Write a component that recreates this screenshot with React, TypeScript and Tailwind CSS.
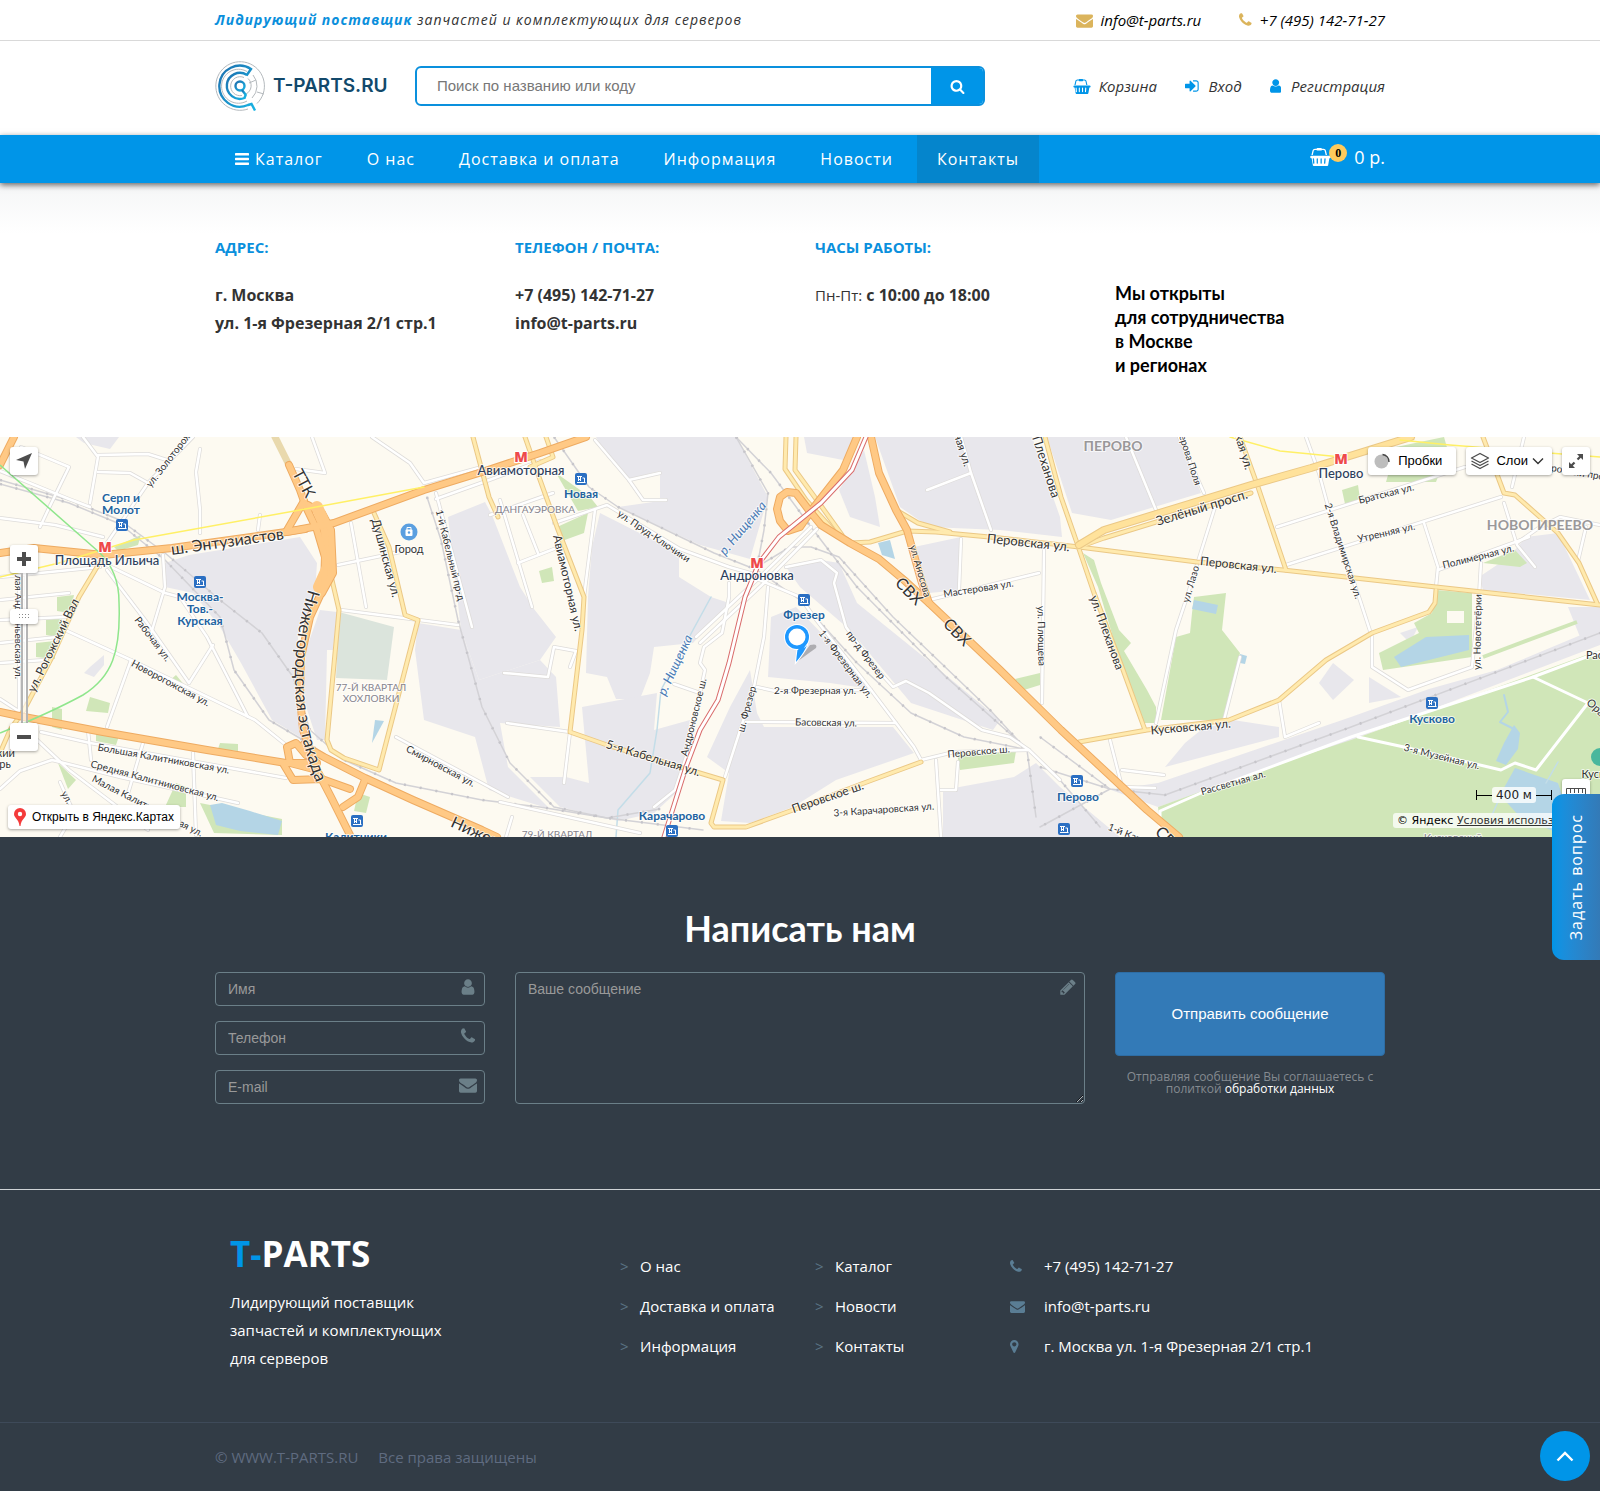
import type { ReactNode } from 'react'

// Each icon: left edge and width of the glyph inside the 1792 unit em, then its outline
const ICONS = {
  envelope: {
    box: '0 0 1792 1792',
    d: 'M1792 710v794q0 66-47 113t-113 47h-1472q-66 0-113-47t-47-113v-794q44 49 101 87 362 246 497 345 57 42 92.500 65.500t94.500 48 110 24.500h2q51 0 110-24.500t94.500-48 92.500-65.500q170-123 498-345 57-39 100-87zm0-294q0 79-49 151t-122 123q-376 261-468 325-10 7-42.500 31t-54 38.500-52 32.500-57.500 27-50 9h-2q-23 0-50-9t-57.500-27-52-32.500-54-38.500-42.500-31q-91-64-262-182.500t-205-142.500q-62-42-117-115.500t-55-136.500q0-78 41.500-130t118.500-52h1472q65 0 112.500 47t47.500 113z',
  },
  phone: {
    box: '192 0 1408 1792',
    d: 'M1600 1240q0 27-10 70.500t-21 68.500q-21 50-122 106-94 51-186 51-27 0-53-3.500t-57.500-12.500-47-14.500-55.500-20.500-49-18q-98-35-175-83-127-79-264-216t-216-264q-48-77-83-175-3-9-18-49t-20.500-55.500-14.500-47-12.500-57.500-3.500-53q0-92 51-186 56-101 106-122 25-11 68.500-21t70.500-10q14 0 21 3 18 6 53 76 11 19 30 54t35 63.500 31 53.500q3 4 17.500 25t21.500 35.500 7 28.500q0 20-28.500 50t-62 55-62 53-28.500 46q0 9 5 22.500t8.500 20.500 14 24 11.500 19q76 137 174 235t235 174q2 1 19 11.500t24 14 20.500 8.500 22.500 5q18 0 46-28.500t53-62 55-62 50-28.500q14 0 28.500 7t35.500 21.500 25 17.500q25 15 53.500 31t63.500 35 54 30q70 35 76 53 3 7 3 21z',
  },
  user: {
    box: '256 0 1280 1792',
    d: 'M1536 1399q0 109-62.500 187t-150.500 78h-854q-88 0-150.500-78t-62.500-187q0-85 8.500-160.500t31.500-152 58.500-131 94-89 134.500-34.500q131 128 313 128t313-128q76 0 134.500 34.500t94 89 58.500 131 31.500 152 8.500 160.500zm-256-887q0 159-112.500 271.500t-271.500 112.500-271.500-112.500-112.500-271.500 112.500-271.500 271.500-112.500 271.500 112.500 112.500 271.500z',
  },
  search: {
    box: '64 0 1664 1792',
    d: 'M1216 832q0-185-131.500-316.500t-316.500-131.500-316.500 131.500-131.500 316.500 131.500 316.500 316.500 131.500 316.500-131.500 131.500-316.500zm512 832q0 52-38 90t-90 38q-54 0-90-38l-343-342q-179 124-399 124-143 0-273.500-55.500t-225-150-150-225-55.500-273.500 55.500-273.500 150-225 225-150 273.500-55.500 273.500 55.500 225 150 150 225 55.500 273.500q0 220-124 399l343 343q37 37 37 90z',
  },
  signIn: {
    box: '128 0 1536 1792',
    d: 'M1312 896q0 26-19 45l-544 544q-19 19-45 19t-45-19-19-45v-288h-448q-26 0-45-19t-19-45v-384q0-26 19-45t45-19h448v-288q0-26 19-45t45-19 45 19l544 544q19 19 19 45zm352-352v704q0 119-84.500 203.500t-203.500 84.500h-320q-13 0-22.500-9.500t-9.500-22.500q0-4-1-20t-.5-26.500 3-23.500 10-19.500 20.500-6.500h320q66 0 113-47t47-113v-704q0-66-47-113t-113-47h-312l-11.500-1-11.500-3-8-5.500-7-9-2-13.500q0-4-1-20t-.5-26.500 3-23.500 10-19.500 20.500-6.500h320q119 0 203.500 84.500t84.500 203.500z',
  },
  pencil: {
    box: '128 0 1536 1792',
    d: 'M491 1536l91-91-235-235-91 91v107h128v128h107zm523-928q0-22-22-22-10 0-17 7l-542 542q-7 7-7 17 0 22 22 22 10 0 17-7l542-542q7-7 7-17zm-54-192l416 416-832 832h-416v-416zm683 96q0 53-37 90l-166 166-416-416 166-165q36-38 90-38 53 0 91 38l235 234q37 39 37 91z',
  },
  marker: {
    box: '384 0 1024 1792',
    d: 'M1152 640q0-106-75-181t-181-75-181 75-75 181 75 181 181 75 181-75 75-181zm256 0q0 109-33 179l-364 774q-16 33-47.500 52t-67.500 19-67.500-19-46.500-52l-365-774q-33-70-33-179 0-212 150-362t362-150 362 150 150 362z',
  },
}

const BASKET =
  'M2048 768q53 0 90.500 37.500t37.500 90.500-37.500 90.500-90.500 37.500h-15l-115 662q-8 46-44 76t-82 30h-1280q-46 0-82-30t-44-76l-115-662h-15q-53 0-90.500-37.500t-37.500-90.500 37.500-90.500 90.500-37.500h1792zm-1563 800q26-2 43.500-22.500t15.500-46.500l-32-416q-2-26-22.500-43.500t-46.500-15.500-43.500 22.500-15.500 46.500l32 416q2 25 20.500 42t43.500 17h5zm411-64v-416q0-26-19-45t-45-19-45 19-19 45v416q0 26 19 45t45 19 45-19 19-45zm384 0v-416q0-26-19-45t-45-19-45 19-19 45v416q0 26 19 45t45 19 45-19 19-45zm352 5l32-416q2-26-15.500-46.500t-43.500-22.500-46.500 15.500-22.500 43.500l-32 416q-2 26 15.500 46.500t43.500 22.500h5q25 0 43.500-17t20.500-42zm-1156-1217l-93 412h-132l101-441q19-88 89-143.500t160-55.500h167q0-26 19-45t45-19h384q26 0 45 19t19 45h167q90 0 160 55.500t89 143.500l101 441h-132l-93-412q-11-44-45.500-72t-79.500-28h-167q0 26-19 45t-45 19h-384q-26 0-45-19t-19-45h-167q-45 0-79.500 28t-45.500 72z'

function Icon({ name, className }: { name: keyof typeof ICONS; className: string }) {
  return (
    <svg viewBox={ICONS[name].box} fill="currentColor" className={className} aria-hidden="true">
      <path d={ICONS[name].d} />
    </svg>
  )
}

function BasketIcon({ className }: { className: string }) {
  return (
    <svg viewBox="128 0 2048 1792" fill="currentColor" className={className} aria-hidden="true">
      <path d={BASKET} />
    </svg>
  )
}

function Container({ children, className = '' }: { children: ReactNode; className?: string }) {
  return <div className={`mx-auto w-full max-w-[1200px] px-[15px] ${className}`}>{children}</div>
}

/* ---------- Header ---------- */

function LogoMark() {
  return (
    <svg viewBox="0 0 50 50" className="size-[50px]" fill="none" aria-hidden="true">
      <defs>
        <linearGradient id="logoBlue" x1="0" y1="0" x2="1" y2="1">
          <stop offset="0" stopColor="#1d6fae" />
          <stop offset="1" stopColor="#19b4e4" />
        </linearGradient>
      </defs>
      <g stroke="#b4b9bd" strokeWidth="1">
        <path d="M33 48A24.300 24.300 0 1 1 42 42.500" />
        <path d="M38 14A17 17 0 0 1 37 37M32 40A17 17 0 1 1 32 10.500" />
        <path d="M33 17.500A9.500 9.500 0 0 1 31 33M27 34.500A9.500 9.500 0 1 1 29 16.500" />
        <path d="M34 22L41 19M42 31L49 33" />
      </g>
      <g stroke="url(#logoBlue)" strokeWidth="2.400">
        <path d="M31.500 14.500L36 8A20.500 20.500 0 1 0 33 44L36.500 43L40 49.500" />
        <path d="M32 14A13 13 0 1 0 29.500 37L31 33" />
        <circle cx="25" cy="25" r="4.500" />
        <path d="M27 29L30.500 33.500" />
      </g>
    </svg>
  )
}

function TopBar() {
  return (
    <div className="border-b border-[#d9d9d9]">
      <Container className="flex h-10 items-center justify-between italic">
        <p className="text-sm tracking-[1px] text-[#333]">
          <b className="text-[#0a8fdc]">Лидирующий поставщик</b> запчастей и комплектующих для серверов
        </p>
        <div className="flex gap-[38px] text-[15px] text-black">
          <a href="mailto:info@t-parts.ru" className="flex items-center gap-2">
            <Icon name="envelope" className="h-[17px] w-auto text-[#dbb45c]" />
            info@t-parts.ru
          </a>
          <a href="tel:+74951427127" className="flex items-center gap-2">
            <Icon name="phone" className="h-4 w-auto text-[#dbb45c]" />
            +7 (495) 142-71-27
          </a>
        </div>
      </Container>
    </div>
  )
}

function SearchRow() {
  return (
    <Container className="flex h-[94px] items-center pb-1">
      <a href="#" className="flex w-[200px] items-center gap-2">
        <LogoMark />
        <span className="font-['Inter',sans-serif] text-[19px] font-semibold text-[#12496b]">T-PARTS.RU</span>
      </a>
      <form className="flex h-10 w-[570px] overflow-hidden rounded-md border-2 border-[#0a90dd]">
        <input
          type="text"
          aria-label="Поиск"
          placeholder="Поиск по названию или коду"
          className="min-w-0 flex-1 px-5 font-['Liberation_Sans',sans-serif] text-[15px] outline-none placeholder:text-[#777]"
        />
        <button type="button" aria-label="Найти" className="flex w-[52px] items-center justify-center bg-[#0095e8] text-white">
          <Icon name="search" className="size-[15px]" />
        </button>
      </form>
      <div className="ml-auto flex gap-7 text-[15px] text-[#333] italic">
        <a href="#" className="flex items-center gap-2">
          <BasketIcon className="h-[15px] w-[18px] text-[#0095e8]" />
          Корзина
        </a>
        <a href="#" className="flex items-center gap-2.5">
          <Icon name="signIn" className="h-4 w-auto text-[#0095e8]" />
          Вход
        </a>
        <a href="#" className="flex items-center gap-2.5">
          <Icon name="user" className="h-4 w-auto text-[#0095e8]" />
          Регистрация
        </a>
      </div>
    </Container>
  )
}

const NAV = ['О нас', 'Доставка и оплата', 'Информация', 'Новости', 'Контакты']

function NavBar() {
  return (
    <nav className="relative bg-[#0095e8] text-white shadow-[0_2px_6px_rgba(0,0,0,0.6)]">
      <Container className="flex h-12 items-stretch text-base">
        <div className="flex gap-1 tracking-[1px]">
          <a href="#" className="flex items-center gap-1.5 px-5">
            <svg viewBox="0 0 14 12" className="h-3 w-3.5" fill="currentColor" aria-hidden="true">
              <rect width="14" height="2.500" rx="0.600" />
              <rect y="4.700" width="14" height="2.500" rx="0.600" />
              <rect y="9.400" width="14" height="2.500" rx="0.600" />
            </svg>
            Каталог
          </a>
          {NAV.map((item) => (
            <a
              key={item}
              href="#"
              className={`flex items-center px-5 ${item === 'Контакты' ? 'bg-[#0585cc]' : ''}`}
            >
              {item}
            </a>
          ))}
        </div>
        <a href="#" className="ml-auto flex items-center pb-1 text-lg">
          <BasketIcon className="h-[18px] w-[21px]" />
          <span className="-ml-0.5 mb-2 flex size-[18px] items-center justify-center rounded-full bg-[#ffcb5c] font-['Liberation_Serif',serif] text-xs font-bold text-black">
            0
          </span>
          <span className="ml-[7px]">0 р.</span>
        </a>
      </Container>
    </nav>
  )
}

/* ---------- Contacts ---------- */

function Contacts() {
  return (
    <section className="bg-gradient-to-b from-[#f5f6f7] to-white to-20%">
      <Container className="grid h-[254px] grid-cols-4 gap-[30px] pt-[52px] text-base leading-7 text-[#333]">
        <div>
          <h3 className="mb-[22px] text-[15px] leading-6 font-bold text-[#0a90dd]">АДРЕС:</h3>
          <p className="font-bold">
            г. Москва
            <br />
            ул. 1-я Фрезерная 2/1 стр.1
          </p>
        </div>
        <div>
          <h3 className="mb-[22px] text-[15px] leading-6 font-bold text-[#0a90dd]">ТЕЛЕФОН / ПОЧТА:</h3>
          <p className="font-bold">
            +7 (495) 142-71-27
            <br />
            info@t-parts.ru
          </p>
        </div>
        <div>
          <h3 className="mb-[22px] text-[15px] leading-6 font-bold text-[#0a90dd]">ЧАСЫ РАБОТЫ:</h3>
          <p>
            <span className="text-[15px]">Пн-Пт:</span> <b>с 10:00 до 18:00</b>
          </p>
        </div>
        <p className="mt-[46px] font-['Lato',sans-serif] text-lg leading-6 font-bold text-black">
          Мы открыты
          <br />
          для сотрудничества
          <br />
          в Москве
          <br />и регионах
        </p>
      </Container>
    </section>
  )
}

/* ---------- Map ---------- */

const INDUSTRIAL = [
  '165,126 189,118 300,100 317,126 315,156 298,200 300,260 310,306 272,283 241,226 220,190 193,156 165,150',
  '306,213 327,213 325,303 317,303 303,260',
  '418,186 461,193 479,243 540,223 556,240 560,290 500,286 508,330 550,372 489,353 475,300 424,283 415,213',
  '448,80 485,65 492,78 520,150 534,172 556,200 540,223 479,243 461,193',
  '76,0 119,0 110,12 84,6',
  '90,230 104,218 104,228 94,240 84,236',
  '596,0 736,0 768,60 750,122 700,108 618,70 660,64 660,34 628,42 607,20',
  '600,76 679,116 679,140 711,160 729,166 693,206 654,210 650,236 640,262 616,262 607,240 586,236 588,160 592,110',
  '582,270 657,256 654,293 690,283 679,353 654,376 618,384 560,370 530,340 566,340 589,346',
  '771,180 796,170 830,205 871,252 830,246 768,240',
  '750,233 757,276 764,290 893,290 914,316 836,343 793,370 750,386 721,384 729,336 707,320 730,270',
  '943,353 1014,340 1036,326 1060,350 1090,375 1120,400 943,400',
  '875,0 1032,0 1060,80 1062,100 1000,93 929,90 900,70',
  '804,0 857,0 843,23 807,16',
  '839,53 864,13 875,60 880,90 850,80',
  '839,126 857,166 930,225 1000,283 993,293 911,266 850,193 800,150 786,130 821,123',
  '914,110 961,100 961,153 929,156',
  '1047,0 1179,0 1201,56 1111,83 1072,76',
  '1526,100 1558,96 1590,163 1483,153 1479,140 1500,126 1515,113',
  '1333,226 1354,243 1333,263 1319,246',
  '1369,240 1401,260 1369,266',
  '1201,293 1233,283 1279,290 1279,300 1165,330 1185,306',
  '1111,353 1158,346 1351,280 1429,252 1497,233 1600,190 1600,208 1344,306 1158,370',
  '1568,170 1600,170 1600,196 1580,200',
  '1400,196 1418,190 1410,206',
  '320,173 337,175 333,213 306,213',
]

const PARKS = [
  '114,110 141,98 138,108 118,114',
  '57,160 74,158 70,176 57,174',
  '46,183 62,181 62,201 46,198',
  '36,206 55,204 55,222 36,220',
  '90,260 110,266 108,276 86,274',
  '52,270 62,272 62,293 52,290',
  '96,290 120,296 116,308 96,304',
  '220,306 238,307 238,314 218,312',
  '165,370 176,346 186,350 186,370',
  '200,366 282,382 282,398 214,396',
  '169,244 176,238 186,250',
  '358,356 370,360 366,376 354,374',
  '58,326 76,343 68,352',
  '556,36 590,60 598,70 578,74',
  '557,90 588,76 584,96 562,104',
  '539,134 552,130 554,144 542,146',
  '957,316 1016,314 1014,326 960,333',
  '1015,242 1040,236 1040,248 1024,253',
  '1083,116 1094,123 1101,146 1119,193 1131,206 1124,214 1147,253 1156,270 1156,286 1144,286 1119,220 1098,150',
  '1194,160 1226,156 1222,193 1240,216 1226,283 1161,283 1176,200 1190,196 1192,176',
  '1436,153 1472,156 1472,220 1383,233 1379,216 1419,196 1414,186 1432,176',
  '1386,45 1396,10 1444,0 1448,14 1436,45',
  '1342,53 1358,48 1360,62 1345,67',
  '1483,126 1515,113 1527,126 1520,130',
  '1158,370 1269,330 1351,303 1600,213 1600,400 1180,400 1160,385',
]

const WATER = [
  '210,368 222,366 250,374 282,384 278,398 240,394 216,388',
  '1394,220 1426,200 1469,198 1469,213 1401,230',
  '1194,163 1218,168 1216,177 1192,172',
  '1240,217 1247,219 1245,227 1240,226',
  '1514,288 1520,296 1518,312 1506,328 1496,324 1504,306',
  '1515,331 1558,346 1566,370 1558,396 1520,380 1500,358',
  '878,106 890,103 895,122 882,118',
  '375,283 384,284 372,306',
]

const STREETS = [
  '193,0 148,46 107,106',
  '83,0 98,20 90,66',
  '21,10 69,30 48,73 40,90',
  '0,81 55,88 103,100',
  '98,18 148,17 170,24',
  '98,35 130,36 148,46',
  '0,34 69,62 90,70',
  '107,133 145,183 189,246',
  '65,193 131,223 193,253 255,283 286,308',
  '107,128 165,156 180,160 207,200 248,280',
  '213,208 189,246',
  '131,223 107,290',
  '41,295 90,306 286,341',
  '52,323 120,340 238,366',
  '34,300 69,333 148,393',
  '88,293 91,323',
  '143,306 127,360',
  '193,316 196,398',
  '0,352 20,334 52,323',
  '60,400 74,376 60,345',
  '396,300 508,360',
  '341,173 458,188',
  '436,56 472,190',
  '19,136 19,275',
  '26,136 26,275',
  '0,140 100,130',
  '0,163 69,156',
  '0,183 66,180',
  '0,206 57,200',
  '0,226 45,223',
  '163,118 165,150 150,200',
  '338,128 400,115',
  '351,86 366,170',
  '312,0 325,36 296,32',
  '200,12 196,35 200,73 200,96',
  '260,78 258,93',
  '372,0 410,26 424,46 482,30',
  '436,62 492,42 540,24',
  '500,63 532,170',
  '518,126 554,112',
  '523,78 538,116',
  '490,78 553,56',
  '595,73 584,160',
  '595,3 629,43 643,63 666,63',
  '629,43 660,36',
  '507,286 570,295 564,346',
  '554,86 607,68 680,112 729,130 757,138',
  '504,236 548,240 554,210 576,214 570,230',
  '0,262 20,275',
  '768,150 764,200 754,250 725,340',
  '757,250 775,254 871,253',
  '746,285 896,286',
  '757,142 800,160 814,180 871,253 896,286 914,310 921,323',
  '921,323 954,315 1029,313',
  '786,130 821,123 837,136 834,146 846,190 875,230 893,250 906,244 929,256 982,293 1010,300 1029,313 1060,343',
  '1044,113 1042,266',
  '929,163 1039,136',
  '961,102 959,153',
  '961,0 971,36 991,93',
  '971,36 927,53',
  '729,146 729,160 722,196 704,210 700,226 705,233 686,320 675,353 654,370',
  '700,256 674,247',
  '936,323 941,400',
  '941,353 956,353 958,325',
  '811,90 760,140 696,200',
  '817,92 764,146 700,206',
  '1306,0 1319,36 1329,73 1360,163 1372,200 1372,230 1408,253 1472,230 1479,160 1481,126',
  '1277,90 1465,30',
  '1286,128 1501,60',
  '1424,86 1438,130 1436,150',
  '1438,133 1529,100',
  '1215,70 1186,163 1176,193 1156,286',
  '1179,0 1204,56',
  '1126,0 1156,73',
  '1240,220 1224,283',
  '1279,263 1285,300 1319,286',
  '1504,66 1517,108 1535,130',
  '1524,0 1512,50',
  '1110,303 1122,350 1155,351',
  '1122,333 1164,338',
  '1517,106 1540,90 1560,80 1600,88',
  '1586,90 1578,124',
  '500,365 640,396',
  '512,380 506,400',
]

const PARK_PATHS = [
  '1160,390 1160,374 1201,356 1351,300 1533,240 1600,215',
  '1358,300 1404,310 1501,333 1515,326 1536,333 1588,266 1533,240',
]

const YELLOW_ROADS = [
  '100,125 79,160 52,220 24,273 10,293 0,316',
  '332,143 339,173 327,303 331,313 344,321 379,333 418,183 405,178 389,110 374,76',
  '473,0 489,60 498,80',
  '525,0 539,40 557,90 584,160 582,193 570,295 607,308 723,343 711,386 714,390 746,390 793,373 864,346 921,325',
  '546,0 553,20 530,30',
  '786,0 785,32 806,63 834,94 852,106 870,105 907,94 936,95 1000,101 1079,110 1197,125 1283,133 1436,150 1600,168',
  '796,0 795,33 819,66 842,98',
  '1045,0 1061,60 1077,106 1094,156 1122,230 1145,293',
  '1079,110 1104,101 1251,56',
  '1240,0 1258,50 1286,133',
  '1483,0 1504,56 1515,58 1558,96 1579,126 1597,166',
  '1079,305 1147,293 1229,283 1279,263 1326,223 1372,196 1429,175 1435,166 1436,153',
  '896,73 918,86 950,95',
]

const ORANGE_ROADS = [
  '0,116 34,111 103,118 172,111 286,95 334,86 424,53 482,35 540,16 586,0',
  '0,28 14,0',
  '289,28 300,53 306,70 317,93 325,120 324,150 310,180 301,220 300,260 303,293 317,333 331,360 351,400',
  '308,68 322,76 331,93 333,136 322,156',
  '304,64 286,95 305,92',
  '0,275 24,280 103,295 207,313 286,326 317,326',
  '303,308 324,320 365,341 413,363 482,393 497,400',
  '365,343 358,360 343,370',
  '317,333 290,326 287,310 296,306 306,318',
  '284,328 293,343 322,342 350,352',
  '857,0 843,33 814,70 800,90 788,94 780,84 777,72 780,60 787,55 796,56 808,72 821,88 850,106 879,122 904,143 929,166 1000,233 1061,293 1147,373 1179,400',
  '871,0 879,36 896,73 907,93 921,143 929,166',
]

const RAILS = [
  '0,43 69,63 120,83 165,116 220,163 262,196 293,240 310,293 344,323 396,346 482,363 540,370 607,381 703,393',
  '0,47 69,66 120,87 165,123 220,180 234,233 269,283 303,303 344,330',
  '427,60 441,103 458,183 482,270 510,326 554,370 607,381 660,372',
  '554,0 589,50 618,70 714,116 757,133 800,163 857,226 911,276 964,300 1029,313',
  '736,0 768,56 764,93 757,130',
  '736,0 771,36 811,90 857,150 946,240 1025,310 1060,343 1100,390',
  '757,130 790,110 811,110 839,120 893,180 990,273 1027,313 1036,380',
  '1040,330 1110,352 1165,358 1351,290 1600,196',
  '1040,300 1110,352 1040,390',
]

type LabelTone = 'blue' | 'gray' | 'district' | 'river' | 'metro'
type MapLabel = [text: string, x: number, y: number, angle: number, size: number, tone?: LabelTone]

const LABELS: MapLabel[] = [
  ['ш. Энтузиастов', 228, 110, -8, 16],
  ['ТТК', 299, 49, 62, 16],
  ['Серп и', 121, 65, 0, 12, 'blue'],
  ['Молот', 121, 77, 0, 12, 'blue'],
  ['Площадь Ильича', 107, 128, 0, 13, 'metro'],
  ['Москва-', 200, 164, 0, 12, 'blue'],
  ['Тов.-', 200, 176, 0, 12, 'blue'],
  ['Курская', 200, 188, 0, 12, 'blue'],
  ['ул. Рогожский Вал', 57, 210, -64, 12],
  ['Рабочая ул.', 150, 204, 53, 10],
  ['Новорогожская ул.', 169, 249, 28, 10],
  ['Душинская ул.', 382, 122, 75, 12],
  ['Город', 409, 116, 0, 11],
  ['1-й Кабельный пр-д', 447, 119, 76, 10],
  ['ДАНГАУЭРОВКА', 535, 76, 0, 10, 'gray'],
  ['Авиамоторная', 521, 38, 0, 13, 'metro'],
  ['Новая', 581, 61, 0, 12, 'blue'],
  ['77-Й КВАРТАЛ', 371, 254, 0, 10, 'gray'],
  ['ХОХЛОВКИ', 371, 265, 0, 10, 'gray'],
  ['Смирновская ул.', 439, 332, 28, 10],
  ['Большая Калитниковская ул.', 163, 325, 10, 10],
  ['Средняя Калитниковская ул.', 154, 347, 15, 10],
  ['Малая Калитниковская ул.', 146, 372, 27, 10],
  ['ул.', 64, 362, 60, 10],
  ['ул. Золоторожский', 178, 16, -52, 10],
  ['лая Андроньевская ул.', 15, 190, 90, 10],
  ['Нижегородская', 503, 413, 24, 16],
  ['Калитники', 356, 404, 0, 12, 'blue'],
  ['79-Й КВАРТАЛ', 557, 401, 0, 10, 'gray'],
  ['ский', 3, 320, 0, 11],
  ['рь', 5, 331, 0, 11],
  ['Авиамоторная ул.', 564, 147, 77, 12],
  ['ул. Пруд-Ключики', 652, 102, 34, 10],
  ['р. Нищенка', 746, 94, -50, 13, 'river'],
  ['р. Нищенка', 679, 230, -65, 13, 'river'],
  ['Андроновка', 757, 143, 0, 13, 'metro'],
  ['Фрезер', 804, 182, 0, 12, 'blue'],
  ['Карачарово', 672, 383, 0, 12, 'blue'],
  ['Андроновское ш.', 697, 281, -76, 10],
  ['ш. Фрезер', 750, 273, -75, 10],
  ['5-я Кабельная ул.', 652, 325, 17, 12],
  ['2-я Фрезерная ул.', 815, 257, 0, 10],
  ['Басовская ул.', 826, 289, 1, 10],
  ['1-я Фрезерная ул.', 843, 229, 53, 10],
  ['пр-д Фрезер', 863, 220, 53, 10],
  ['Перовское ш.', 829, 364, -19, 12],
  ['3-я Карачаровская ул.', 884, 376, -4, 10],
  ['Перовское ш.', 979, 318, -5, 10],
  ['ул. Аносова', 917, 135, 74, 10],
  ['СВХ', 905, 158, 46, 16],
  ['СВХ', 953, 199, 46, 16],
  ['СВХ', 1165, 407, 46, 16],
  ['Мастеровая ул.', 979, 155, -9, 10],
  ['Перовская ул.', 1028, 110, 6, 13],
  ['ул. Плющева', 1038, 199, 89, 10],
  ['Плеханова', 1042, 31, 72, 13],
  ['ная ул.', 959, 14, 72, 11],
  ['ПЕРОВО', 1113, 14, 0, 14, 'district'],
  ['ерова Поля', 1187, 24, 72, 10],
  ['кая ул.', 1240, 16, 73, 12],
  ['Зелёный просп.', 1203, 75, -17, 13],
  ['Перовская ул.', 1238, 132, 6, 12],
  ['ул. Лазо', 1194, 148, -74, 10],
  ['ул. Плеханова', 1103, 197, 70, 12],
  ['2-я Владимирская ул.', 1340, 115, 72, 10],
  ['Братская ул.', 1387, 60, -14, 10],
  ['Утренняя ул.', 1387, 99, -13, 10],
  ['Полимерная ул.', 1479, 123, -14, 10],
  ['НОВОГИРЕЕВО', 1540, 93, 0, 14, 'district'],
  ['Перово', 1341, 41, 0, 13, 'metro'],
  ['ул. Новотетёрки', 1481, 195, -89, 10],
  ['Кусково', 1432, 286, 0, 12, 'blue'],
  ['Кусковская ул.', 1191, 294, -5, 12],
  ['3-я Музейная ул.', 1441, 323, 14, 10],
  ['Рассветная ал.', 1234, 349, -16, 10],
  ['Перово', 1078, 364, 0, 12, 'blue'],
  ['1-й Карачаровский', 1148, 409, 22, 10],
  ['Кусково', 1602, 341, 0, 11],
  ['Оранжерейная', 1614, 292, 42, 11],
  ['Рассветная', 1614, 222, 0, 11],
  ['Кусковский', 1453, 405, 0, 11, 'gray'],
  ['розный проезд', 1585, 40, 10, 10],
]

const LABEL_TONES = {
  blue: 'fill-[#22639f] font-bold',
  gray: 'fill-[#85838c]',
  district: 'fill-[#9a9899] font-bold',
  river: 'fill-[#4a7bb5] italic',
  metro: 'fill-[#2d3e5c] font-medium',
  street: 'fill-[#333]',
}

const STATIONS = [
  [122, 88],
  [200, 145],
  [357, 384],
  [581, 42],
  [804, 163],
  [672, 394],
  [1432, 266],
  [1077, 344],
  [1064, 392],
]

const METRO = [
  [105, 110],
  [521, 20],
  [757, 126],
  [1341, 22],
]

const RED_LINE = '866,0 852,33 821,66 779,100 759,126 745,160 729,226 718,263 700,293 686,330 664,400'
const ZELYONY = '1079,108 1104,93 1251,48 1311,31 1411,0'

function Lines({ items, className }: { items: string[]; className: string }) {
  return (
    <g className={className} fill="none" strokeLinejoin="round" strokeLinecap="round">
      {items.map((points) => (
        <polyline key={points} points={points} />
      ))}
    </g>
  )
}

function Areas({ items, className }: { items: string[]; className: string }) {
  return (
    <g className={className}>
      {items.map((points) => (
        <polygon key={points} points={points} />
      ))}
    </g>
  )
}

function MapCanvas() {
  return (
    <svg viewBox="0 0 1600 400" preserveAspectRatio="xMidYMid slice" className="block size-full" role="img" aria-label="Карта">
      <rect width="1600" height="400" className="fill-[#fdfaf1]" />
      <Areas items={INDUSTRIAL} className="fill-[#e8e7ec]" />
      <polygon points="339,175 394,190 387,243 336,241" className="fill-[#dbe4dc]" />
      <Areas items={PARKS} className="fill-[#d0e6b8]" />
      <Areas items={WATER} className="fill-[#b4d5e6]" />
      <rect x="1447" y="174" width="17" height="12" className="fill-[#fdfaf1]" />
      <polyline points="1483,220 1577,185" className="stroke-[#d0e6b8] stroke-[4]" />
      <Lines
        items={['711,160 693,193 661,253 657,293 650,336 618,373 616,400', '1558,325 1546,346', '1500,360 1492,378']}
        className="stroke-[#c3dde8] stroke-[1.500]"
      />
      <Lines items={['1504,258 1508,275 1500,285 1514,292']} className="stroke-[#b4d5e6] stroke-2" />
      <Lines items={RAILS} className="stroke-[#d3d2d6] stroke-[1.500]" />
      <g fill="none" className="stroke-[#c6c5ca] stroke-[2.500]" strokeDasharray="2 14">
        {RAILS.map((points) => (
          <polyline key={points} points={points} />
        ))}
      </g>
      <Lines items={STREETS} className="stroke-[#dedcda] stroke-[4]" />
      <Lines items={STREETS} className="stroke-white stroke-[2.500]" />
      <Lines items={PARK_PATHS} className="stroke-white stroke-[3]" />
      <Lines items={YELLOW_ROADS} className="stroke-[#ebc886] stroke-[5]" />
      <Lines items={YELLOW_ROADS} className="stroke-[#ffeaae] stroke-[3]" />
      <Lines items={[ZELYONY]} className="stroke-[#ebc886] stroke-[8]" />
      <Lines items={[ZELYONY]} className="stroke-[#ffe29b] stroke-[6]" />
      <Lines items={['275,0 289,28']} className="stroke-[#e9d9ad] stroke-[7]" />
      <Lines items={ORANGE_ROADS} className="stroke-[#eeab62] stroke-[8]" />
      <Lines items={['317,70 327,93 328,130 319,150']} className="stroke-[#ffc985] stroke-[12]" />
      <Lines items={ORANGE_ROADS} className="stroke-[#ffc985] stroke-[6]" />
      <Lines items={['1400,3 1450,8 1600,20', '0,140 59,126 134,103 300,73 424,50', '1230,0 1280,14 1341,20']} className="stroke-[#fff066] stroke-[1.500]" />
      <path
        d="M0 28L100 116C112 128 119 145 119 165C121 215 112 240 83 258Q50 276 0 296"
        className="fill-none stroke-[#8fe68c] stroke-[1.500]"
      />
      <Lines items={[RED_LINE]} className="stroke-[#d96b6b] stroke-[5]" />
      <Lines items={[RED_LINE]} className="stroke-white stroke-[3]" />

      <g textAnchor="middle" className="font-['Lato',sans-serif] [paint-order:stroke] stroke-white/70 stroke-2" strokeLinejoin="round">
        {LABELS.map(([text, x, y, angle, size, tone]) => (
          <text key={`${text}-${x}`} x={x} y={y} fontSize={size} transform={`rotate(${angle} ${x} ${y})`} className={LABEL_TONES[tone ?? 'street']}>
            {text}
          </text>
        ))}
        <path id="estakada" d="M310 148Q294 195 295 245Q296 295 318 350" fill="none" stroke="none" />
        <text fontSize="17" className="fill-[#333]">
          <textPath href="#estakada" startOffset="50%">
            Нижегородская эстакада
          </textPath>
        </text>
        {METRO.map(([x, y]) => (
          <text key={x} x={x} y={y + 5} fontSize="14" className="fill-[#ee4a4a] stroke-white font-['Open_Sans',sans-serif] font-extrabold">
            М
          </text>
        ))}
      </g>

      {STATIONS.map(([x, y]) => (
        <g key={`${x}-${y}`} transform={`translate(${x - 6} ${y - 6})`}>
          <rect width="12" height="12" rx="2" className="fill-[#2b6fc2]" />
          <path d="M2 3.500H7M2 9.500H10.500M3.500 3.500V8M5.500 3.500V8M3 6.500H6M7.500 5H9.500V9" className="fill-none stroke-white stroke-1" />
        </g>
      ))}
      <g transform="translate(409 95)">
        <circle r="8.500" className="fill-[#5b9fe0]" />
        <rect x="-3.500" y="-2.500" width="7" height="6.500" rx="1" className="fill-white" />
        <path d="M-2 -2V-4.500H2V-2" className="fill-none stroke-white" />
        <circle cy="0.500" r="1.200" className="fill-[#5b9fe0]" />
      </g>
      <circle cx="1600" cy="320" r="9" className="fill-[#49b79d]" />

      {/* Office pin */}
      <path d="M798 224L810 208Q818 206 816 211Z" className="fill-black/25" />
      <g className="stroke-white stroke-2 [paint-order:stroke]">
        <path d="M796 225L798 208H807Q804 216 796 225Z" className="fill-[#1e98ff]" />
        <circle cx="797" cy="200" r="12" className="fill-[#1e98ff]" />
      </g>
      <path d="M797 223L799 207H806Q803 215 797 223Z" className="fill-[#1e98ff]" />
      <circle cx="797" cy="200" r="8.500" className="fill-white" />
    </svg>
  )
}

const CONTROL = 'flex items-center justify-center rounded-[3px] bg-white shadow-[0_1px_3px_rgba(0,0,0,0.35)]'

function MapSection() {
  return (
    <section className="relative h-[400px]">
      <div className="h-full overflow-hidden">
        <MapCanvas />
      </div>

      <div className="absolute top-2.5 left-2.5 flex flex-col items-center">
        <button type="button" aria-label="Моё местоположение" className={`${CONTROL} size-7`}>
          <svg viewBox="0 0 16 16" className="size-4 fill-[#4d4d4d]">
            <path d="M16 0L0 7L7.500 8.500L9 16Z" />
          </svg>
        </button>
        <button type="button" aria-label="Приблизить" className={`${CONTROL} mt-[70px] size-7`}>
          <svg viewBox="0 0 14 14" className="size-3.5 fill-[#4d4d4d]">
            <path d="M5 0h4v5H14v4H9V14H5V9H0V5H5Z" />
          </svg>
        </button>
        <div className="flex h-[150px] w-[7px] justify-center border-x-2 border-[#b5b5b5] bg-white/60 pt-9">
          <span className="flex h-[15px] w-7 shrink-0 items-center justify-center rounded-[3px] bg-white shadow-[0_1px_3px_rgba(0,0,0,0.35)]">
            <svg viewBox="0 0 11 5" className="h-[5px] w-[11px] fill-[#888]">
              {[0, 3, 6, 9].map((x) => (
                <path key={x} d={`M${x} 0h1v1h-1zM${x} 3h1v1h-1z`} />
              ))}
            </svg>
          </span>
        </div>
        <button type="button" aria-label="Отдалить" className={`${CONTROL} size-7`}>
          <span className="h-1 w-3.5 bg-[#4d4d4d]" />
        </button>
      </div>

      <div className="absolute top-2.5 right-2.5 flex gap-2.5 font-['Liberation_Sans',sans-serif] text-[13px] text-black">
        <button type="button" className={`${CONTROL} h-7 gap-2 pr-3.5 pl-1.5`}>
          <svg viewBox="0 0 16 16" className="size-4">
            <circle cx="7.500" cy="8.500" r="7" fill="#bdbdbd" />
            <path d="M8.500 1.500A7 7 0 0 1 15 9" fill="none" stroke="#444" strokeWidth="1.400" />
          </svg>
          Пробки
        </button>
        <button type="button" className={`${CONTROL} h-7 gap-1.5 px-2 pl-1`}>
          <svg viewBox="0 0 20 18" className="h-[18px] w-5" fill="none" stroke="#4d4d4d" strokeWidth="1.400" strokeLinejoin="round">
            <path d="M10 1.500L18.500 6L10 10.500L1.500 6ZM1.500 9L10 13.500L18.500 9M1.500 12L10 16.500L18.500 12" />
          </svg>
          Слои
          <svg viewBox="0 0 12 8" className="-ml-0.5 h-2 w-3" fill="none" stroke="#333" strokeWidth="1.400">
            <path d="M1 1.500L6 6.500L11 1.500" />
          </svg>
        </button>
        <button type="button" aria-label="Развернуть" className={`${CONTROL} size-7`}>
          <svg viewBox="0 0 16 16" className="size-4 fill-[#4d4d4d]">
            <path d="M9 1H15V7L12.800 4.800L10.300 7.300L8.700 5.700L11.200 3.200ZM7 15H1V9L3.200 11.200L5.700 8.700L7.300 10.300L4.800 12.800Z" />
          </svg>
        </button>
      </div>

      <a
        href="#"
        className={`${CONTROL} absolute bottom-2 left-2 h-6 gap-1.5 px-1.5 font-['Liberation_Sans',sans-serif] text-xs text-black`}
      >
        <svg viewBox="0 0 12 18" className="h-[18px] w-3">
          <path d="M6 0A6 6 0 0 0 0 6C0 10 5 11 5.500 18H6.500C7 11 12 10 12 6A6 6 0 0 0 6 0Z" fill="#f43b3b" />
          <circle cx="6" cy="6" r="2.200" fill="#fff" />
        </svg>
        Открыть в Яндекс.Картах
      </a>

      <div className="absolute right-2.5 bottom-[30px] flex h-7 items-end gap-2.5 font-['DejaVu_Sans',sans-serif] text-xs text-[#222]">
        <div className="mb-1 flex h-4 w-[76px] items-center">
          <span className="h-2.5 w-px bg-black" />
          <span className="h-px flex-1 bg-black" />
          <span className="rounded-[3px] bg-white/80 px-1 whitespace-nowrap">400 м</span>
          <span className="h-px flex-1 bg-black" />
          <span className="h-2.5 w-px bg-black" />
        </div>
        <button type="button" aria-label="Линейка" className={`${CONTROL} size-7`}>
          <svg viewBox="0 0 20 10" className="h-2.5 w-5" fill="none" stroke="#4d4d4d">
            <path d="M0.500 0.500H19.500V9.500H0.500ZM4.500 1V5M8.500 1V5M12.500 1V5M16.500 1V5" />
          </svg>
        </button>
      </div>

      <p className="absolute right-0 bottom-[9px] w-[207px] overflow-hidden rounded-l-[3px] bg-white/75 pl-1 font-['DejaVu_Sans',sans-serif] text-[11px] leading-[15px] whitespace-nowrap text-black">
        © Яндекс{' '}
        <a href="#" className="text-[#333] underline">
          Условия использования
        </a>
      </p>

      <button
        type="button"
        className="absolute right-0 -bottom-[123px] z-10 flex h-[166px] w-12 items-center justify-center rounded-l-xl bg-gradient-to-r from-[#0095e8] to-[#337ab7] text-base tracking-[1px] text-white"
      >
        <span className="rotate-180 [writing-mode:vertical-rl]">Задать вопрос</span>
      </button>
    </section>
  )
}

/* ---------- Feedback form ---------- */

const FIELDS = [
  { label: 'Имя', type: 'text', icon: 'user' },
  { label: 'Телефон', type: 'tel', icon: 'phone' },
  { label: 'E-mail', type: 'email', icon: 'envelope' },
] as const

function FeedbackForm() {
  return (
    <section className="h-[353px] border-b border-[#cfd3d6] pt-16">
      <h2 className="mb-[17px] text-center font-['Lato',sans-serif] text-4xl leading-[54px] font-bold text-white">Написать нам</h2>
      <Container>
        <form className="grid grid-cols-4 gap-[30px] font-['Liberation_Sans',sans-serif] text-sm">
          <div className="flex flex-col gap-[15px]">
            {FIELDS.map(({ label, type, icon }) => (
              <label key={label} className="relative block">
                <input
                  type={type}
                  aria-label={label}
                  placeholder={label}
                  className="h-[34px] w-full rounded border border-[#6b7f88] bg-transparent px-3 text-white outline-none placeholder:text-[#999]"
                />
                <Icon name={icon} className="absolute top-1.5 right-2 size-[18px] text-[#6b7f88]" />
              </label>
            ))}
          </div>
          <label className="relative col-span-2 block">
            <textarea
              aria-label="Ваше сообщение"
              placeholder="Ваше сообщение"
              className="block h-[132px] w-full rounded border border-[#6b7f88] bg-transparent px-3 py-1.5 text-white outline-none placeholder:text-[#999]"
            />
            <Icon name="pencil" className="absolute top-1.5 right-2 size-[18px] text-[#6b7f88]" />
          </label>
          <div>
            <button type="button" className="h-[84px] w-full rounded border border-[#2e6da4] bg-[#337ab7] text-[15px] text-white">
              Отправить сообщение
            </button>
            <p className="mt-[15px] text-center font-['Open_Sans',sans-serif] text-xs leading-3 text-[#858b91]">
              Отправляя сообщение Вы соглашаетесь с политкой{' '}
              <a href="#" className="text-white">
                обработки данных
              </a>
            </p>
          </div>
        </form>
      </Container>
    </section>
  )
}

/* ---------- Footer ---------- */

function LinkList({ items }: { items: string[] }) {
  return (
    <ul className="col-span-2 px-[15px] pt-4 leading-10 whitespace-nowrap">
      {items.map((item) => (
        <li key={item} className="flex">
          <span className="w-5 text-[#5a7384]">&gt;</span>
          <a href="#">{item}</a>
        </li>
      ))}
    </ul>
  )
}

const CONTACT_ROWS = [
  { icon: 'phone', text: '+7 (495) 142-71-27' },
  { icon: 'envelope', text: 'info@t-parts.ru' },
  { icon: 'marker', text: 'г. Москва ул. 1-я Фрезерная 2/1 стр.1' },
] as const

function Footer() {
  return (
    <footer className="text-[15px] text-white">
      <Container className="h-[232px] pt-10">
        <div className="grid grid-cols-12">
          <div className="col-span-4 px-[15px]">
            <p className="mb-2.5 text-[35px] leading-[48px] font-bold">
              <span className="text-[#0095e8]">T-</span>PARTS
            </p>
            <p className="leading-7">
              Лидирующий поставщик
              <br />
              запчастей и комплектующих
              <br />
              для серверов
            </p>
          </div>
          <LinkList items={['О нас', 'Доставка и оплата', 'Информация']} />
          <LinkList items={['Каталог', 'Новости', 'Контакты']} />
          <ul className="col-span-4 px-[15px] pt-4 leading-10">
            {CONTACT_ROWS.map(({ icon, text }) => (
              <li key={text} className="flex items-center">
                <span className="w-[34px]">
                  <Icon name={icon} className="h-[15px] w-auto text-[#5a7d94]" />
                </span>
                {text}
              </li>
            ))}
          </ul>
        </div>
      </Container>
      <div className="border-t border-[#3e4a59]">
        <Container className="flex h-[68px] items-center gap-5 text-[#5f6b80]">
          <span>© WWW.T-PARTS.RU</span>
          <span>Все права защищены</span>
        </Container>
      </div>
    </footer>
  )
}

export default function App() {
  return (
    <div className="min-h-screen bg-white font-['Open_Sans',sans-serif]">
      <header>
        <TopBar />
        <SearchRow />
        <NavBar />
      </header>
      <main>
        <Contacts />
        <MapSection />
      </main>
      <div className="bg-[#323c46]">
        <FeedbackForm />
        <Footer />
      </div>
      <button
        type="button"
        aria-label="Наверх"
        className="fixed right-2.5 bottom-2.5 flex size-[50px] items-center justify-center rounded-full bg-[#0095e8]"
      >
        <svg viewBox="0 0 18 12" className="h-3 w-[18px]" fill="none" stroke="#fff" strokeWidth="2.400">
          <path d="M1.500 10.500L9 3L16.500 10.500" />
        </svg>
      </button>
    </div>
  )
}
